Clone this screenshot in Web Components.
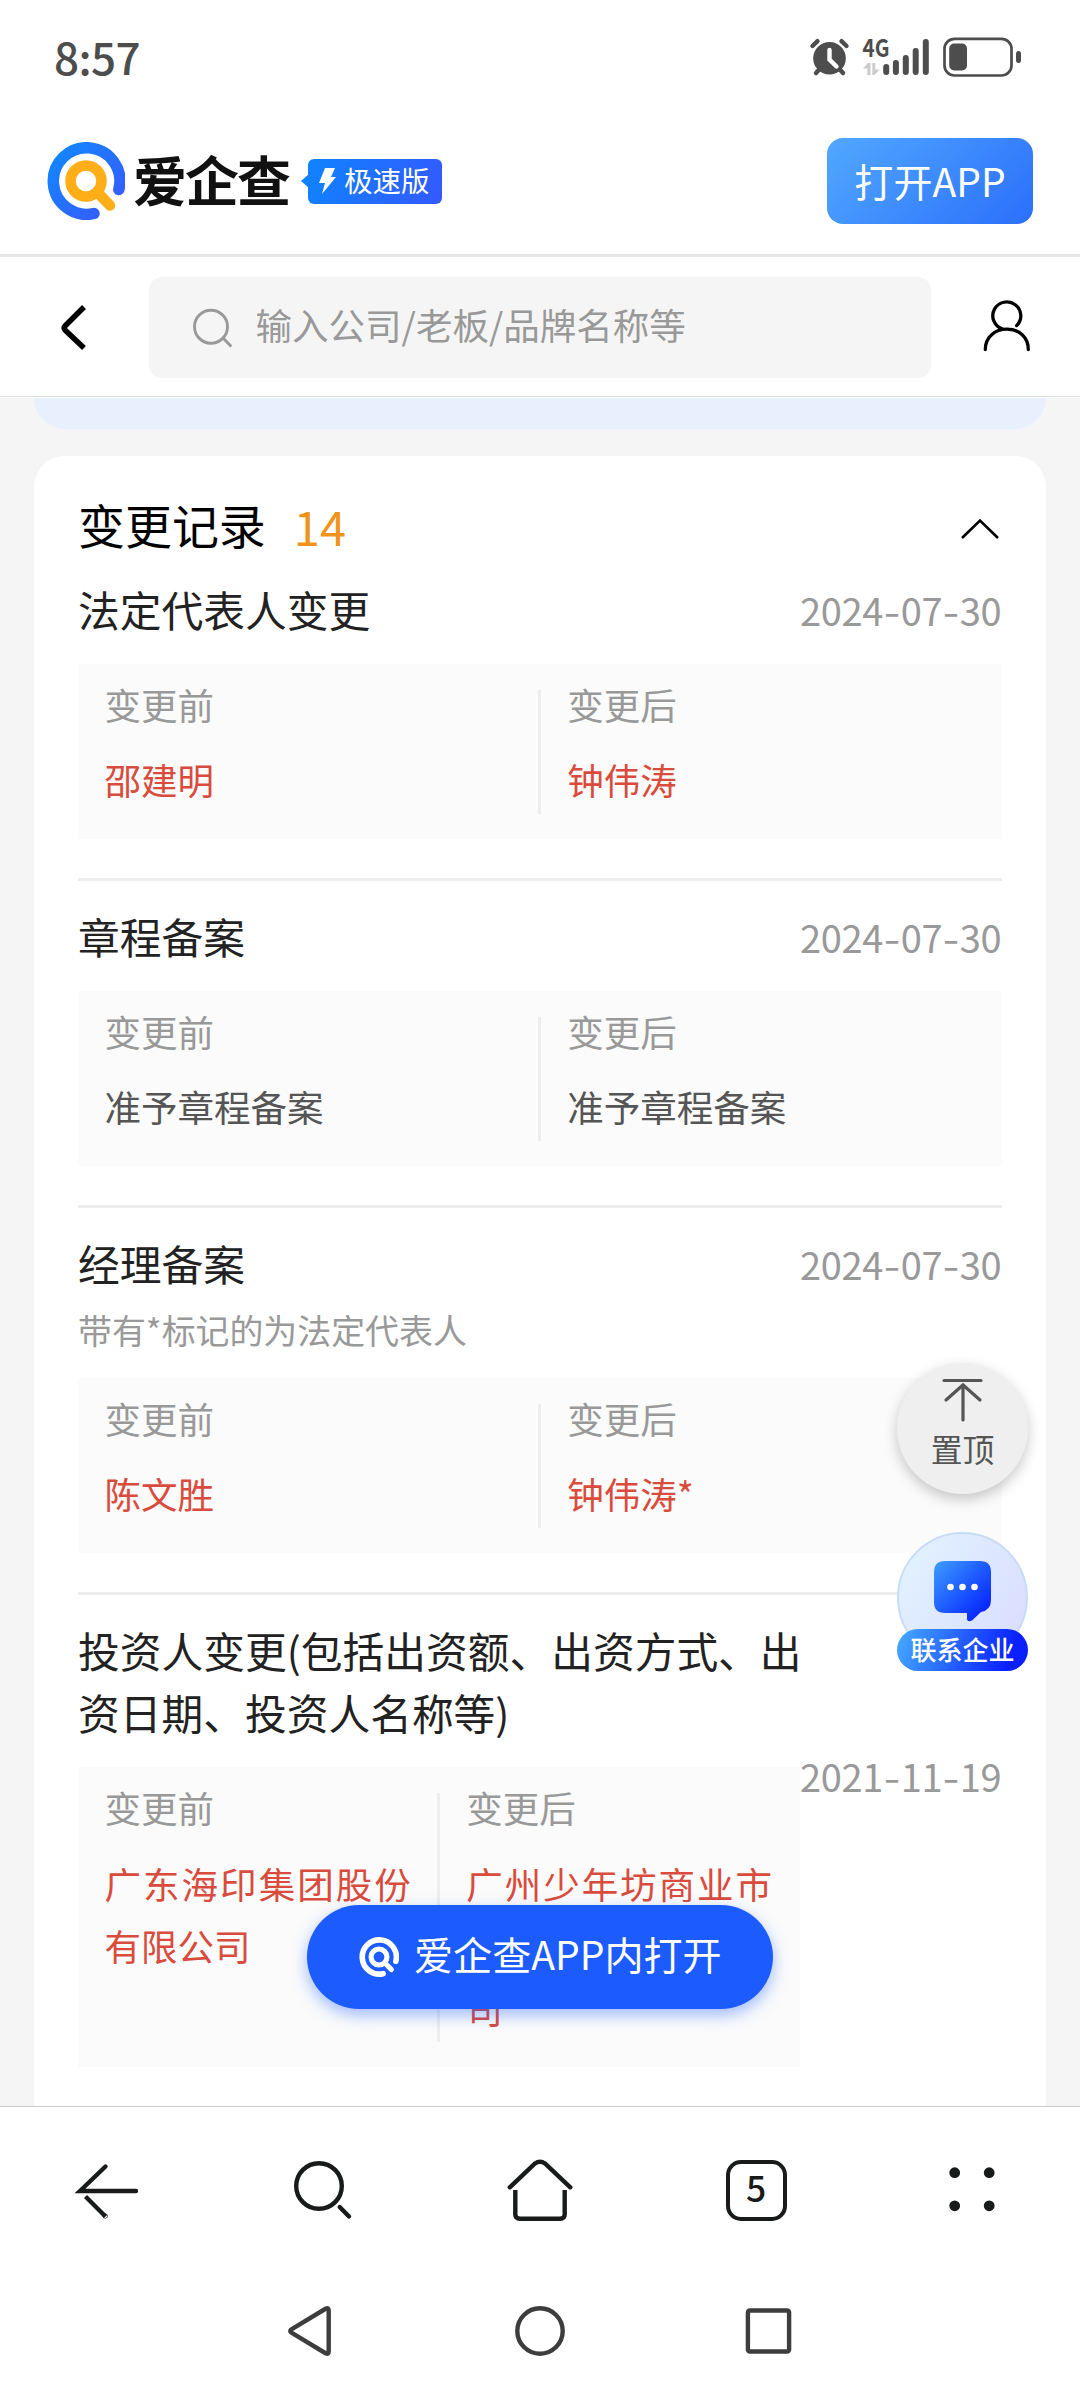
<!DOCTYPE html>
<html lang="zh-CN">
<head>
<meta charset="utf-8">
<title>变更记录</title>
<style>
  html, body { margin: 0; padding: 0; }
  body {
    width: 1080px;
    height: 2388px;
    overflow: hidden;
    background: #fff;
    font-family: "Noto Sans CJK SC", "Noto Sans", sans-serif;
    color: #000;
  }
</style>
</head>
<body>
<phone-screen>
  <status-bar slot="top" time="8:57"></status-bar>
  <brand-header slot="top">打开APP</brand-header>
  <search-row slot="top">输入公司/老板/品牌名称等</search-row>

  <record-card heading="变更记录" count="14">
    <change-record date="2024-07-30" linked>
      <span slot="title">法定代表人变更</span>
      <span slot="before">邵建明</span>
      <span slot="after">钟伟涛</span>
    </change-record>
    <change-record date="2024-07-30">
      <span slot="title">章程备案</span>
      <span slot="before">准予章程备案</span>
      <span slot="after">准予章程备案</span>
    </change-record>
    <change-record date="2024-07-30" note="带有*标记的为法定代表人" linked>
      <span slot="title">经理备案</span>
      <span slot="before">陈文胜</span>
      <span slot="after">钟伟涛*</span>
    </change-record>
    <change-record date="2021-11-19" linked narrow>
      <span slot="title">投资人变更(包括出资额、出资方式、出资日期、投资人名称等)</span>
      <span slot="before">广东海印集团股份有限公司</span>
      <span slot="after">广州少年坊商业市场经营管理有限公司</span>
    </change-record>
  </record-card>

  <float-tools slot="over"></float-tools>
  <open-pill slot="over">爱企查APP内打开</open-pill>

  <browser-bar slot="bottom" tabs="5"></browser-bar>
  <system-nav slot="bottom"></system-nav>
</phone-screen>

<script>
class BaseElement extends HTMLElement {
  constructor() {
    super();
    this.attachShadow({ mode: 'open' });
  }
  connectedCallback() {
    this.shadowRoot.innerHTML = this.render();
  }
  attr(name) {
    return this.getAttribute(name) || '';
  }
}

class PhoneScreen extends BaseElement {
  render() {
    return `
<style>
:host { display: flex; flex-direction: column; width: 1080px; height: 2388px; overflow: hidden; }
main { flex: 1; min-height: 0; position: relative; overflow: hidden; background: #f5f5f5; }
.prev { height: 31px; margin: 0 34px 27px; background: #e8f0fe; border-radius: 0 0 31px 31px; }
</style>
<slot name="top"></slot>
<main>
  <div class="prev"></div>
  <slot></slot>
  <slot name="over"></slot>
</main>
<slot name="bottom"></slot>`;
  }
}

class StatusBar extends BaseElement {
  render() {
    return `
<style>
:host { display: flex; justify-content: space-between; box-sizing: border-box; height: 115px; padding: 20px 58px 0 54px; color: #4d4d4d; }
.time { font-size: 44px; line-height: 54px; font-weight: 500; letter-spacing: -0.6px; margin-top: 9px; }
.icons { display: flex; gap: 11.500px; }
svg { display: block; }
</style>
<div class="time">${this.attr('time')}</div>
<div class="icons">
  <svg width="41" height="58" viewBox="809 20 41 58" fill="none" stroke="#4d4d4d" stroke-width="4.4" stroke-linecap="round">
    <circle cx="829.5" cy="58.3" r="16.3" fill="#4d4d4d" stroke="none"/>
    <path d="M812.5 46l5-4.800M846.500 46l-5-4.800M820 68.500l-4 4.500M839 68.500l4 4.500"/>
    <path d="M829.500 50v9.500l7 7" stroke="#fff"/>
  </svg>
  <svg width="69" height="58" viewBox="862 20 69 58">
    <text x="862.500" y="57.300" font-family="Noto Sans CJK SC" font-size="24.500" font-weight="700" textLength="27" lengthAdjust="spacingAndGlyphs" fill="#4d4d4d">4G</text>
    <path d="M863 68.500l5-5.500h2.500v12h-3.200v-6.500zM879.500 69.500l-5 5.500h-2.200v-12h3v6.500z" fill="#ccc"/>
    <path d="M886.200 67v5M895.900 63v9M905.800 58v14M915.700 51v21M925.800 42v30" stroke="#4d4d4d" stroke-width="6" stroke-linecap="round"/>
  </svg>
  <svg width="80" height="58" viewBox="942 20 80 58" fill="#4d4d4d">
    <rect x="944.500" y="38.800" width="67" height="36.700" rx="10" fill="none" stroke="#4d4d4d" stroke-width="2.700"/>
    <rect x="949.200" y="43.500" width="17.800" height="27" rx="5"/>
    <rect x="1016" y="51" width="5" height="12" rx="2.500"/>
  </svg>
</div>`;
  }
}

class BrandHeader extends BaseElement {
  render() {
    return `
<style>
:host { display: flex; align-items: center; box-sizing: border-box; height: 142px; padding: 0 47px 7px; border-bottom: 3px solid #e5e5e5; }
svg { display: block; }
.name { margin-left: 8px; width: 159px; font-size: 54px; line-height: 80px; font-weight: 700; letter-spacing: -2px; color: #111; white-space: nowrap; transform: translateY(-2px); }
.badge { display: flex; align-items: center; margin-left: 16px; width: 134px; height: 45px; box-sizing: border-box; padding-left: 11px; border-radius: 6px;
  background: linear-gradient(110deg, #0f83ff, #3459ff); color: #fff; font-size: 28.500px; line-height: 40px; font-weight: 400; position: relative; }
.badge::before { content: ""; position: absolute; left: -7px; top: 15px; border: 7px solid transparent; border-left: 0; border-right: 8px solid #0f83ff; }
.badge span { margin: -3px 0 0 8px; white-space: nowrap; }
.open { margin-left: auto; width: 206px; height: 86px; border-radius: 16px; background: linear-gradient(135deg, #52a8ff, #2a6ffb); color: #fff; font-size: 39.100px; line-height: 84px; text-align: center; }
</style>
<svg width="78" height="78" viewBox="0 0 78 78" fill="none" stroke-linecap="round">
  <defs><linearGradient id="ring" x1="0" y1="0" x2="1" y2="1"><stop offset="0" stop-color="#1088ff"/><stop offset="1" stop-color="#3a58ff"/></linearGradient></defs>
  <path d="M47 71.500A33.300 33.300 0 1 1 71.800 47.500" stroke="url(#ring)" stroke-width="11.500"/>
  <circle cx="39" cy="39" r="15.500" stroke="#ffae18" stroke-width="10.500"/>
  <path d="M52 52l11 11.500" stroke="#ffae18" stroke-width="10.500"/>
</svg>
<div class="name">爱企查</div>
<div class="badge">
  <svg width="17" height="28" viewBox="0 0 17 28"><path d="M6 1h10l-4 9h5L3 27l3-11H0z" fill="#fff"/></svg>
  <span>极速版</span>
</div>
<div class="open"><slot></slot></div>`;
  }
}

class SearchRow extends BaseElement {
  render() {
    return `
<style>
:host { display: flex; align-items: center; box-sizing: border-box; height: 141px; padding: 0 47px 0 52px; background: #fff; border-bottom: 1px solid #fff; box-shadow: inset 0 -1px #dddedf; }
svg { display: block; }
.field { display: flex; align-items: center; margin-left: 47px; width: 782px; height: 101px; box-sizing: border-box; padding-left: 40px; border-radius: 13px; background: #f5f5f5; }
.hint { margin-left: 20.500px; font-size: 36.520px; line-height: 54px; margin-top: -5px; color: #999; white-space: nowrap; }
.user { margin-left: auto; }
</style>
<svg width="50" height="60" viewBox="52 297 50 60" fill="none" stroke="#000" stroke-width="5.500"><path d="M84 307L65.500 325.500q-2.500 2.500 0 5L84 348" stroke-linejoin="round"/></svg>
<div class="field">
  <svg width="46" height="46" viewBox="189 304 46 46" fill="none" stroke="#999" stroke-width="2.900"><circle cx="211" cy="326.700" r="16.500"/><path d="M223 338l8.300 8.500"/></svg>
  <div class="hint"><slot></slot></div>
</div>
<svg class="user" width="52" height="60" viewBox="981 297 52 60" fill="none" stroke="#000" stroke-width="3.300" stroke-linecap="round">
  <path d="M1016.600 325.600A14 13.800 0 1 0 1002 328.700"/>
  <path d="M985.300 349.500C985.300 337 995 329.200 1007 329.200S1028.300 337 1028.300 349.500"/>
</svg>`;
  }
}

class RecordCard extends BaseElement {
  render() {
    return `
<style>
:host { display: block; margin: 0 34px; padding: 35px 44px 0; background: #fff; border-radius: 31px 31px 0 0; height: 1700px; }
header { display: flex; align-items: center; height: 63px; padding-right: 2px; }
h2 { margin: 2px 0 -2px; font-size: 46.960px; font-weight: 400; line-height: 63px; }
.count { margin: 4px 0 -4px 28px; color: #f0931a; font-size: 46.960px; line-height: 63px; font-weight: 400; }
svg { display: block; margin: 13px 0 0 auto; }
</style>
<header>
  <h2>${this.attr('heading')}</h2>
  <span class="count">${this.attr('count')}</span>
  <svg width="40" height="24" viewBox="0 0 40 24" fill="none" stroke="#000" stroke-width="2.600"><path d="M2 21L20 3.500 38 21"/></svg>
</header>
<slot></slot>`;
  }
}

class ChangeRecord extends BaseElement {
  render() {
    const note = this.attr('note');
    return `
<style>
:host { display: grid; grid-template-columns: 1fr 202px; padding: 26px 0 39px; border-bottom: 3px solid #ededed; }
.title { font-size: 41.740px; line-height: 62.600px; color: #222; margin-top: -2px; margin-bottom: 2px; }
.date { font-size: 38px; line-height: 62.600px; color: #999; letter-spacing: -0.300px; margin-top: -1px; white-space: nowrap; }
.date i { font-style: normal; display: inline-block; width: 17.500px; text-align: center; transform: scaleX(1.25); }
.note { grid-column: 1 / 3; font-size: 33.910px; line-height: 52px; color: #999; margin-top: 8px; }
.pair { grid-column: 1 / 3; display: grid; grid-template-columns: 1fr 3px 1fr; margin-top: 21.500px; padding: 26px 28px 24.800px 26.500px; background: #fbfbfb; }
.pair hr { border: 0; margin: 0 -0.700px 0 0.700px; background: #ededed; width: 3px; }
.after { padding-left: 26.500px; }
.label { font-size: 36.520px; line-height: 35px; color: #999; position: relative; top: -3px; }
.value { margin-top: 26.400px; font-size: 36.520px; line-height: 62.600px; color: #555; text-align: justify; position: relative; top: -2px; }
:host([linked]) .value { color: #d94b3c; }
:host([narrow]) .title { width: 724px; grid-column: 1 / 3; }
:host([narrow]) .pair { grid-column: 1; grid-row: 2; }
:host([narrow]) .before { padding-right: 26px; }
:host([narrow]) .date { grid-column: 2; grid-row: 2; }
</style>
<div class="title"><slot name="title"></slot></div>
<div class="date">${this.attr('date').replace(/-/g, '<i>-</i>')}</div>
${note ? `<div class="note">${note}</div>` : ''}
<div class="pair">
  <div class="before"><div class="label">变更前</div><div class="value"><slot name="before"></slot></div></div>
  <hr>
  <div class="after"><div class="label">变更后</div><div class="value"><slot name="after"></slot></div></div>
</div>`;
  }
}

// round buttons that lie over the list
class FloatTools extends BaseElement {
  render() {
    return `
<style>
:host { position: absolute; right: 52px; top: 965px; width: 131px; display: flex; flex-direction: column; gap: 38px; }
.top { height: 131px; border-radius: 50%; background: #efefef; box-shadow: 0 5px 14px rgba(0,0,0,.22); display: flex; flex-direction: column; align-items: center; color: #555; font-size: 31.800px; line-height: 36px; }
.top svg { margin: 14px 0 8px; }
.contact { height: 140px; display: flex; flex-direction: column; align-items: center; position: relative; }
.disc { position: absolute; inset: 0 0 auto; height: 131px; box-sizing: border-box; border: 2px solid #c8dcf8; border-radius: 50%; background: linear-gradient(120deg, #e2f3ff, #d9dcff); }
.contact svg { position: relative; margin-top: 29px; }
.tag { position: relative; margin-top: 7px; width: 131px; height: 42px; border-radius: 21px; background: linear-gradient(110deg, #45acff, #0a20ff 85%); color: #fff; font-size: 26px; line-height: 40px; font-weight: 500; text-align: center; }
svg { display: block; flex: none; }
</style>
<div class="top">
  <svg width="44" height="45" viewBox="0 0 44 45" fill="none" stroke="#555" stroke-width="3.200" stroke-linecap="round"><path d="M3 3.500h37M22 8v35M5 23L22 8l17 15"/></svg>
  <span>置顶</span>
</div>
<div class="contact">
  <div class="disc"></div>
  <svg width="57" height="61" viewBox="0 0 57 61">
    <defs><linearGradient id="b" x1="0" y1="0" x2="1" y2="1"><stop offset="0" stop-color="#3d9dff"/><stop offset=".9" stop-color="#0422ff"/></linearGradient></defs>
    <path d="M11 0h35q11 0 11 11v28q0 10-10 12l-9 8.500q-5 2-5-2V52H11Q0 52 0 41V11Q0 0 11 0z" fill="url(#b)"/>
    <g fill="#fff"><circle cx="16.500" cy="26" r="3.300"/><circle cx="28.500" cy="26" r="3.300"/><circle cx="40.500" cy="26" r="3.300"/></g>
  </svg>
  <div class="tag">联系企业</div>
</div>`;
  }
}

class OpenPill extends BaseElement {
  render() {
    return `
<style>
:host { position: absolute; left: 307px; bottom: 97px; width: 466px; height: 104px; box-sizing: border-box; border-radius: 52px; background: #1c5cff; box-shadow: 0 6px 16px rgba(28,92,255,.42);
  display: flex; align-items: center; padding-left: 52px; color: #fff; font-size: 39.100px; line-height: 56px; white-space: nowrap; }
svg { display: block; flex: none; margin-right: 15px; }
span { margin-top: -8px; }
</style>
<svg width="40" height="40" viewBox="0 0 78 78" fill="none" stroke="#fff" stroke-linecap="round">
  <path d="M47 71.500A33.300 33.300 0 1 1 71.800 47.500" stroke-width="11"/>
  <circle cx="39" cy="39" r="15.500" stroke-width="10"/>
  <path d="M52 52l11 11.500" stroke-width="10"/>
</svg>
<span><slot></slot></span>`;
  }
}

class BrowserBar extends BaseElement {
  render() {
    return `
<style>
:host { display: grid; grid-template-columns: repeat(5, 216px); height: 169px; background: #fff; border-top: 1px solid #c9c9c9; }
svg { display: block; margin: 44px auto 0; }
.tabs { box-sizing: border-box; width: 61px; height: 61px; margin: 53px auto 0; border: 4.500px solid #191a1a; border-radius: 15px; font-size: 35.500px; line-height: 46px; font-weight: 500; text-align: center; color: #191a1a; }
</style>
<svg width="80" height="80" viewBox="68 2151 80 80" fill="none" stroke="#191a1a" stroke-width="4.400" stroke-linecap="round"><path d="M105.500 2166.500L80 2191h56"/><path d="M85.500 2196.500l20 20" stroke-linecap="butt"/><circle cx="105.200" cy="2216" r=".3" /></svg>
<svg width="80" height="80" viewBox="284 2151 80 80" fill="none" stroke="#191a1a" stroke-width="4.400" stroke-linecap="round"><circle cx="319" cy="2186" r="22.800"/><path d="M339.700 2207l9.300 9.500"/></svg>
<svg width="80" height="80" viewBox="500 2151 80 80" fill="none" stroke="#191a1a" stroke-width="4.400"><path d="M509.800 2187.300L535 2163.500q5-3.500 10 0L570.300 2187.300" stroke-linecap="round"/><path d="M515.300 2190v24q0 4.700 4.700 4.700h40q4.700 0 4.700-4.700v-24"/></svg>
<div class="tabs">${this.attr('tabs')}</div>
<svg width="80" height="80" viewBox="932 2151 80 80" fill="#191a1a"><circle cx="954.700" cy="2172.700" r="5.400"/><circle cx="989.200" cy="2172.700" r="5.400"/><circle cx="954.700" cy="2205.800" r="5.400"/><circle cx="989.200" cy="2205.800" r="5.400"/></svg>`;
  }
}

class SystemNav extends BaseElement {
  render() {
    return `
<style>
:host { display: flex; justify-content: center; gap: 170px; height: 112px; background: #fff; }
svg { display: block; margin-top: 25px; }
</style>
<svg width="60" height="60" viewBox="279 2301 60 60" fill="none" stroke="#3d3d3d" stroke-width="4.400" stroke-linejoin="round"><path d="M290 2329.600L325 2308.500q2.700-1 2.700 2V2351.500q0 3-2.700 2L290 2332.400q-1.500-1.400 0-2.800z"/></svg>
<svg width="60" height="60" viewBox="510 2301 60 60" fill="none" stroke="#3d3d3d" stroke-width="4.400"><circle cx="540" cy="2331" r="22.700"/></svg>
<svg width="60" height="60" viewBox="740.500 2301 60 60" fill="none" stroke="#3d3d3d" stroke-width="4.400"><rect x="748.400" y="2310.500" width="41.200" height="41" rx="2"/></svg>`;
  }
}

customElements.define('phone-screen', PhoneScreen);
customElements.define('status-bar', StatusBar);
customElements.define('brand-header', BrandHeader);
customElements.define('search-row', SearchRow);
customElements.define('record-card', RecordCard);
customElements.define('change-record', ChangeRecord);
customElements.define('float-tools', FloatTools);
customElements.define('open-pill', OpenPill);
customElements.define('browser-bar', BrowserBar);
customElements.define('system-nav', SystemNav);
</script>
</body>
</html>
